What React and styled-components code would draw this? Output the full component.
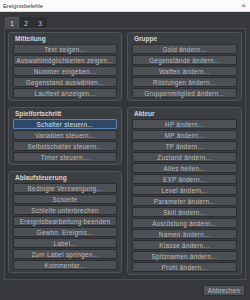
import styled, { createGlobalStyle } from "styled-components";

const GlobalStyle = createGlobalStyle`
  html, body {
    margin: 0;
    padding: 0;
    background: #37393c;
  }
  * {
    box-sizing: border-box;
  }
`;

const Window = styled.div`
  width: 250px;
  height: 300px;
  display: flex;
  flex-direction: column;
  background: #37393c;
  font-family: "Liberation Sans", Arial, sans-serif;
  overflow: hidden;
`;

const TitleBar = styled.div`
  height: 12px;
  flex: none;
  display: flex;
  align-items: center;
  justify-content: space-between;
  padding: 0 4px 0 3px;
  background: #fbfbfb;
  border-bottom: 1px solid #d9d9d9;
  color: #333;
  font-size: 5.8px;
`;

const Close = styled.span`
  font-size: 8px;
  color: #666;
  line-height: 1;
`;

const Body = styled.div`
  padding: 5px 4px 0;
  display: flex;
  flex-direction: column;
`;

const TabRow = styled.div`
  display: flex;
  height: 11px;
  padding-left: 1px;
`;

const Tab = styled.div`
  width: 14px;
  height: 11px;
  display: flex;
  align-items: center;
  justify-content: center;
  font-size: 6.5px;
  color: ${(p) => (p.$active ? "#e4e4e4" : "#cfcfcf")};
  background: ${(p) => (p.$active ? "#4a4d51" : "#2c2e31")};
  border: 1px solid ${(p) => (p.$active ? "#55585c" : "#2c2e31")};
  border-bottom: none;
  border-radius: 2px 2px 0 0;
`;

const TabPanel = styled.div`
  display: grid;
  grid-template-columns: 114px 115px;
  column-gap: 5px;
  padding: 3px 3px 4px 3px;
  background: #333639;
  border: 1px solid #4a4d51;
`;

const Column = styled.div`
  display: flex;
  flex-direction: column;
  gap: 6px;
`;

const GroupBox = styled.div`
  display: flex;
  flex-direction: column;
  padding: 0 4px 2px 4px;
  background: #3c3f42;
  border: 1px solid #505357;
  border-radius: 3px;
`;

const GroupTitle = styled.div`
  height: 11px;
  line-height: 11px;
  padding-left: 2px;
  font-size: 6.5px;
  font-weight: bold;
  color: #d6d6d6;
`;

const ButtonList = styled.div`
  display: flex;
  flex-direction: column;
  gap: 1px;
`;

const CommandButton = styled.div`
  height: 10px;
  display: flex;
  align-items: center;
  justify-content: center;
  font-size: 6.3px;
  letter-spacing: 0.3px;
  white-space: nowrap;
  color: ${(p) => (p.$selected ? "#dde4ec" : "#bdbdbd")};
  background: ${(p) => (p.$selected ? "#2e4868" : "#4d5054")};
  border: 1px solid ${(p) => (p.$selected ? "#5b84b3" : "#2b2d30")};
  border-radius: 1px;
`;

const Footer = styled.div`
  display: flex;
  justify-content: flex-end;
  padding: 5px 5px 0 0;
`;

const CancelButton = styled.div`
  width: 42px;
  height: 11px;
  display: flex;
  align-items: center;
  justify-content: center;
  font-size: 6.3px;
  letter-spacing: 0.2px;
  color: #bdbdbd;
  background: #505357;
  border: 1px solid #2b2d30;
  border-radius: 1px;
`;

const leftGroups = [
  {
    title: "Mitteilung",
    items: [
      "Text zeigen...",
      "Auswahlmöglichkeiten zeigen...",
      "Nummer eingeben...",
      "Gegenstand auswählen...",
      "Lauftext anzeigen...",
    ],
  },
  {
    title: "Spielfortschritt",
    items: [
      "Schalter steuern...",
      "Variablen steuern...",
      "Selbstschalter steuern...",
      "Timer steuern...",
    ],
  },
  {
    title: "Ablaufsteuerung",
    items: [
      "Bedingte Verzweigung...",
      "Schleife",
      "Schleife unterbrechen",
      "Ereignisbearbeitung beenden",
      "Gewhn. Ereignis...",
      "Label...",
      "Zum Label springen...",
      "Kommentar...",
    ],
  },
];

const rightGroups = [
  {
    title: "Gruppe",
    items: [
      "Gold ändern...",
      "Gegenstände ändern...",
      "Waffen ändern...",
      "Rüstungen ändern...",
      "Gruppenmitglied ändern...",
    ],
  },
  {
    title: "Akteur",
    items: [
      "HP ändern...",
      "MP ändern...",
      "TP ändern...",
      "Zustand ändern...",
      "Alles heilen...",
      "EXP ändern...",
      "Level ändern...",
      "Parameter ändern...",
      "Skill ändern...",
      "Ausrüstung ändern...",
      "Namen ändern...",
      "Klasse ändern...",
      "Spitznamen ändern...",
      "Profil ändern...",
    ],
  },
];

function Group({ title, items }) {
  return (
    <GroupBox>
      <GroupTitle>{title}</GroupTitle>
      <ButtonList>
        {items.map((item) => (
          <CommandButton key={item} $selected={item === "Schalter steuern..."}>
            {item}
          </CommandButton>
        ))}
      </ButtonList>
    </GroupBox>
  );
}

export default function App() {
  return (
    <>
      <GlobalStyle />
      <Window>
        <TitleBar>
          <span>Ereignisbefehle</span>
          <Close>×</Close>
        </TitleBar>
        <Body>
          <TabRow>
            <Tab $active>1</Tab>
            <Tab>2</Tab>
            <Tab>3</Tab>
          </TabRow>
          <TabPanel>
            <Column>
              {leftGroups.map((g) => (
                <Group key={g.title} {...g} />
              ))}
            </Column>
            <Column>
              {rightGroups.map((g) => (
                <Group key={g.title} {...g} />
              ))}
            </Column>
          </TabPanel>
        </Body>
        <Footer>
          <CancelButton>Abbrechen</CancelButton>
        </Footer>
      </Window>
    </>
  );
}
